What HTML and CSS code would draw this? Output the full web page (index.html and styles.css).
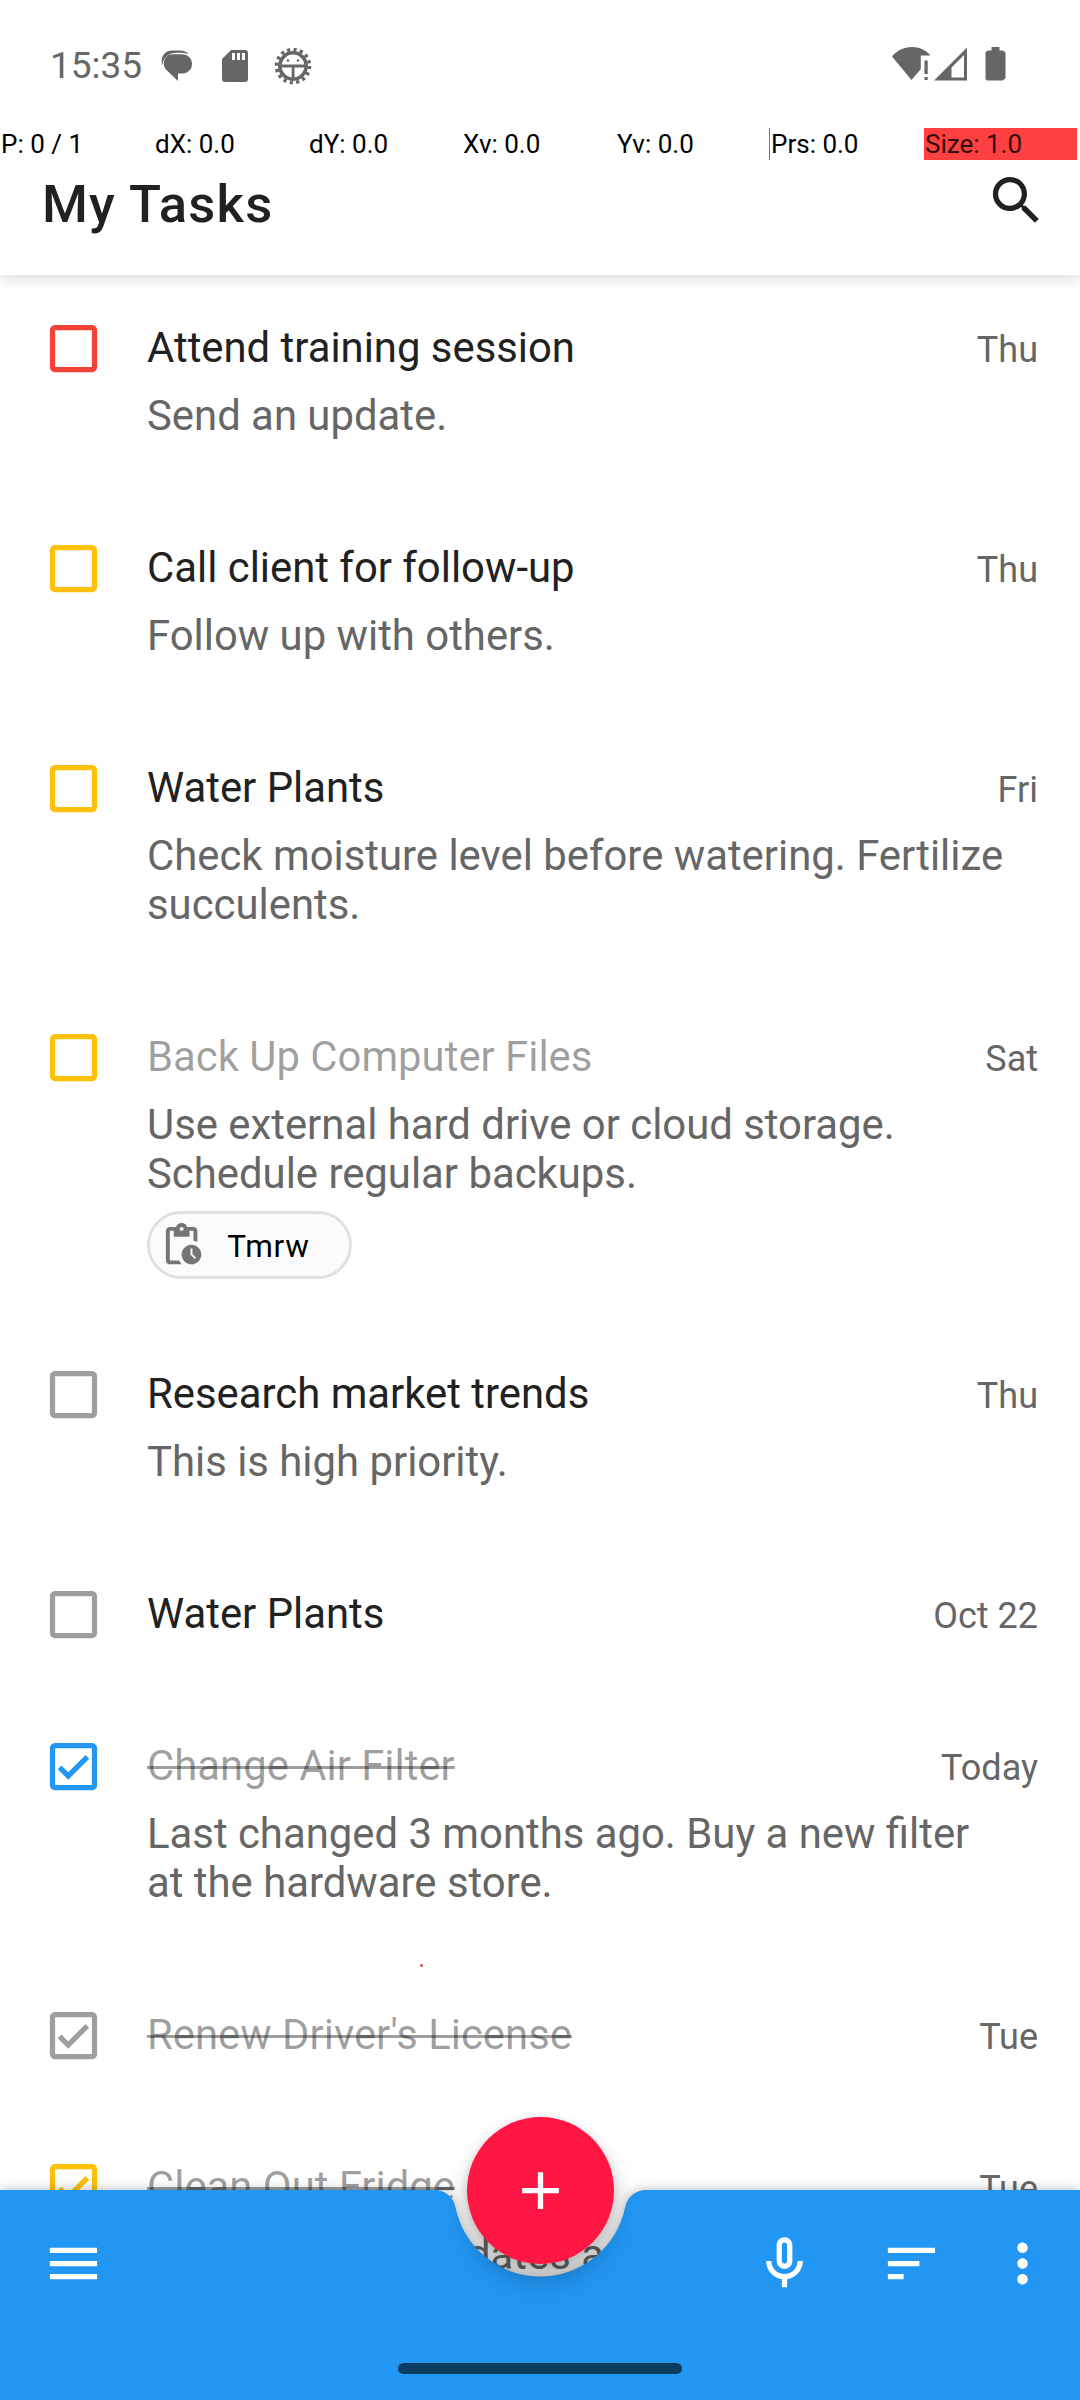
FILE: index.html
```html
<!DOCTYPE html>
<html lang="en">
<head>
<meta charset="utf-8">
<title>My Tasks</title>
<link rel="stylesheet" href="styles.css">
</head>
<body>
<svg class="defs" width="0" height="0" aria-hidden="true">
  <symbol id="box" viewBox="0 0 24 24"><path d="M19 3H5c-1.1 0-2 .9-2 2v14c0 1.1.9 2 2 2h14c1.1 0 2-.9 2-2V5c0-1.1-.9-2-2-2zm0 16H5V5h14v14z"/></symbol>
  <symbol id="box-checked" viewBox="0 0 24 24"><path d="M19 3H5c-1.1 0-2 .9-2 2v14c0 1.1.9 2 2 2h14c1.1 0 2-.9 2-2V5c0-1.1-.9-2-2-2zm0 16H5V5h14v14zM17.99 9l-1.41-1.42-6.59 6.59-2.58-2.57-1.42 1.41 4 3.99z"/></symbol>
</svg>
<div class="screen">
  <header class="app-header">
    <div class="status-bar">
      <span class="clock">15:35</span>
      <div class="notifications">
        <svg width="32" height="32" viewBox="0 0 32 32"><path d="M1 15C-.5 6 4 .5 11 .5h8c4 0 6.500 1.500 8.500 3.500C24 3 21 2.700 16 2.700 8 2.700 2.500 7 1.600 14z"/><path d="M12 4.300h9.500a9.600 9.600 0 0 1 0 19.200H17V31L5 19.500C1.500 16 1.500 4.300 12 4.300z"/></svg>
        <svg width="26" height="32" viewBox="0 0 26 32"><path fill-rule="evenodd" d="M9 0h14a3 3 0 0 1 3 3v26a3 3 0 0 1-3 3H3a3 3 0 0 1-3-3V9zM10 3v7h3V3zm5 0v7h3V3zm5 0v7h3V3z"/></svg>
        <svg width="38" height="38" viewBox="-19 -19 38 38"><circle r="16.500" fill="none" stroke="#666" stroke-width="3.600" stroke-dasharray="3.100 3.380"/><circle r="13.200" fill="none" stroke="#666" stroke-width="3.600"/><path d="M-13-1.500h26v3h-26zM-1.300 0h2.800v13h-2.800z"/><circle cx="-5" cy="-5.500" r="1.300"/><circle cx="5" cy="-5.500" r="1.300"/></svg>
      </div>
      <div class="system-icons">
        <svg width="39" height="34" viewBox="0 0 39 34"><path d="M0 9.500C10-3 29-3 38.500 8.500h-9.700v13.500L19.500 33zM32.500 13.500h3.200V27h-3.200zM32.500 30h3.200v3h-3.200z"/></svg>
        <svg class="signal" width="33" height="34" viewBox="0 0 33 34"><path fill-rule="evenodd" d="M0 33.500L33 .5v33zM17.500 30.500H30V8L17.500 20.500z"/></svg>
        <svg class="battery" width="21" height="34" viewBox="0 0 21 34"><path d="M6.500 0h8v3.500H18l2.500 2V31L18 33.500H2L.5 32V5.500l2-2h4z"/></svg>
      </div>
    </div>
    <div class="toolbar">
      <h1 class="title">My Tasks</h1>
      <svg class="icon search" viewBox="0 0 24 24"><path d="M15.500 14h-.79l-.28-.27C15.410 12.590 16 11.110 16 9.500 16 5.910 13.090 3 9.500 3S3 5.910 3 9.500 5.910 16 9.500 16c1.610 0 3.090-.59 4.230-1.570l.27.28v.79l5 4.990L20.490 19l-4.990-5zm-6 0C7.010 14 5 11.990 5 9.500S7.010 5 9.500 5 14 7.010 14 9.500 11.990 14 9.500 14z"/></svg>
    </div>
  </header>

  <ul class="tasks">
    <li class="task"><svg class="icon red"><use href="#box"/></svg>
      <div class="body"><div class="head"><span class="name">Attend training session</span><span class="date">Thu</span></div>
      <p class="note">Send an update.</p></div></li>
    <li class="task"><svg class="icon amber"><use href="#box"/></svg>
      <div class="body"><div class="head"><span class="name">Call client for follow-up</span><span class="date">Thu</span></div>
      <p class="note">Follow up with others.</p></div></li>
    <li class="task"><svg class="icon amber"><use href="#box"/></svg>
      <div class="body"><div class="head"><span class="name">Water Plants</span><span class="date">Fri</span></div>
      <p class="note">Check moisture level before watering. Fertilize succulents.</p></div></li>
    <li class="task"><svg class="icon amber"><use href="#box"/></svg>
      <div class="body"><div class="head"><span class="name hidden-until">Back Up Computer Files</span><span class="date">Sat</span></div>
      <p class="note">Use external hard drive or cloud storage. Schedule regular backups.</p>
      <div class="chip"><svg viewBox="0 0 24 24"><path d="M17 12c-2.760 0-5 2.240-5 5s2.240 5 5 5 5-2.240 5-5-2.240-5-5-5zm1.650 7.350L16.500 17.200V14h1v2.790l1.850 1.850-.7.710zM18 3h-3.180C14.400 1.840 13.300 1 12 1s-2.400.84-2.820 2H6c-1.100 0-2 .9-2 2v15c0 1.100.9 2 2 2h6.110c-.59-.57-1.070-1.250-1.420-2H6V5h2v3h8V5h2v5.080c.71.1 1.380.31 2 .6V5c0-1.100-.9-2-2-2zm-6 2c-.55 0-1-.45-1-1s.45-1 1-1 1 .45 1 1-.45 1-1 1z"/></svg><span class="chip-label">Tmrw</span></div></div></li>
    <li class="task"><svg class="icon gray"><use href="#box"/></svg>
      <div class="body"><div class="head"><span class="name">Research market trends</span><span class="date">Thu</span></div>
      <p class="note">This is high priority.</p></div></li>
    <li class="task"><svg class="icon gray"><use href="#box"/></svg>
      <div class="body"><div class="head"><span class="name">Water Plants</span><span class="date">Oct 22</span></div></div></li>
    <li class="task"><svg class="icon blue"><use href="#box-checked"/></svg>
      <div class="body"><div class="head"><span class="name done">Change Air Filter</span><span class="date">Today</span></div>
      <p class="note">Last changed 3 months ago. Buy a new filter at the hardware store.</p></div></li>
    <li class="task"><svg class="icon gray"><use href="#box-checked"/></svg>
      <div class="body"><div class="head"><span class="name done">Renew Driver's License</span><span class="date">Tue</span></div></div></li>
    <li class="task"><svg class="icon amber"><use href="#box-checked"/></svg>
      <div class="body"><div class="head"><span class="name done">Clean Out Fridge</span><span class="date">Tue</span></div>
      <p class="note">Check expiration dates and</p></div></li>
  </ul>

  <div class="pointer-strip">
    <span>P: 0 / 1</span><span>dX: 0.0</span><span>dY: 0.0</span><span>Xv: 0.0</span><span>Yv: 0.0</span><span class="pressure">Prs: 0.0</span><span class="size">Size: 1.0</span>
  </div>
  <i class="touch-dot"></i>

  <footer class="bottom-bar">
    <svg class="bar-shape" width="1080" height="210" viewBox="0 0 1080 210"><path d="M0 0H434.800A21 21 0 0 1 455.400 16.900A86.600 86.600 0 0 0 625.200 16.900A21 21 0 0 1 645.800 0H1080V210H0z"/></svg>
    <button class="fab" aria-label="Add task"><svg class="icon" viewBox="0 0 24 24"><path d="M19 13h-6v6h-2v-6H5v-2h6V5h2v6h6v2z"/></svg></button>
    <nav class="actions">
      <svg class="icon menu" viewBox="0 0 24 24"><path d="M3 18h18v-2H3v2zm0-5h18v-2H3v2zm0-7v2h18V6H3z"/></svg>
      <svg class="icon" viewBox="0 0 24 24"><path d="M12 14c1.660 0 3-1.340 3-3V5c0-1.660-1.340-3-3-3S9 3.340 9 5v6c0 1.660 1.340 3 3 3zm-1-9c0-.55.45-1 1-1s1 .45 1 1v6c0 .55-.45 1-1 1s-1-.45-1-1V5zm6 6c0 2.760-2.240 5-5 5s-5-2.240-5-5H5c0 3.530 2.610 6.430 6 6.920V21h2v-3.080c3.390-.49 6-3.390 6-6.920h-2z"/></svg>
      <svg class="icon sort" viewBox="0 0 24 24"><path d="M3 18h6v-2H3v2zM3 6v2h18V6H3zm0 7h12v-2H3v2z"/></svg>
      <svg class="icon more" viewBox="0 0 24 24"><path d="M12 8c1.100 0 2-.9 2-2s-.9-2-2-2-2 .9-2 2 .9 2 2 2zm0 2c-1.100 0-2 .9-2 2s.9 2 2 2 2-.9 2-2-.9-2-2-2zm0 6c-1.100 0-2 .9-2 2s.9 2 2 2 2-.9 2-2-.9-2-2-2z"/></svg>
    </nav>
    <div class="home-handle"></div>
  </footer>
</div>
</body>
</html>
```
FILE: styles.css
```css
* { box-sizing: border-box; }
body { margin: 0; font-family: Roboto, sans-serif; color: #212121; background: #fff; }
svg { display: block; flex: none; }
.defs { position: absolute; }
.screen { position: relative; width: 1080px; height: 2400px; overflow: hidden; }
.icon { width: 63px; height: 63px; fill: currentColor; }

.app-header { position: relative; height: 275px; background: #fff; box-shadow: 0 3px 14px rgba(0, 0, 0, .15); }
.status-bar { display: flex; align-items: center; height: 132px; padding: 0 74px 0 50px; fill: #666; }
.clock { font-size: 37px; line-height: 44px; color: #666; width: 111px; }
.notifications { display: flex; align-items: center; gap: 27px; margin-top: -2px; }
.notifications svg:nth-child(2) { margin-left: 2px; }
.notifications svg { margin-top: 1px; }
.notifications svg:nth-child(3) { margin-left: -1px; }
.system-icons { display: flex; align-items: center; margin-left: auto; margin-top: -5px; }
.signal { margin-left: 3px; }
.battery { margin-left: 18px; }
.toolbar { display: flex; justify-content: space-between; padding: 37px 32px 0 42px; }
.title { margin: 4px 0 0; font-size: 52.5px; line-height: 62px; font-weight: 500; letter-spacing: 1.2px; }

.tasks { list-style: none; margin: 0; padding: 48px 42px 0; }
.task { display: flex; gap: 42px; padding-bottom: 103px; }
.task > .icon { margin-top: -6px; margin-bottom: -8px; }
.body { flex: 1; }
.head { display: flex; justify-content: space-between; align-items: baseline; height: 49px; }
.name { font-size: 41.85px; line-height: 49px; }
.hidden-until, .done { color: rgba(0, 0, 0, .38); }
.done { text-decoration: line-through; text-decoration-thickness: 3px; text-decoration-skip-ink: none; }
.date { font-size: 36px; line-height: 42px; color: #666; }
.note { margin: 19px 0 0; max-width: 862px; font-size: 41.85px; line-height: 49px; color: #666; }
.red { color: #f44336; }
.amber { color: #ffc107; }
.blue { color: #2196f3; }
.gray { color: #9e9e9e; }
.chip { display: flex; align-items: center; gap: 22px; width: 205px; height: 68px; margin: 13px 0 -13px; padding-left: 8px; border: 3px solid #e0e0e0; border-radius: 34px; background: #fbfbfb; color: #000; }
.chip svg { width: 47.25px; height: 47.25px; fill: #757575; }
.chip-label { padding-top: 2px; font-size: 31.5px; letter-spacing: .8px; }

/* Pointer-location readout drawn by the system above every app */
.pointer-strip { position: absolute; top: 128px; left: 0; display: grid; grid-template-columns: repeat(7, 153px); gap: 1px; font-size: 26px; line-height: 32px; color: #000; }
.pointer-strip span { padding-left: 1px; height: 32px; white-space: nowrap; }
.pointer-strip .pressure { box-shadow: -1px 0 #c65555; }
.pointer-strip .size { background: #ff4040; color: #300c0c; }
.touch-dot { position: absolute; left: 420px; top: 1964px; width: 3px; height: 3px; background: #c01010; border: 1px solid #f08080; }

.bottom-bar { position: absolute; left: 0; bottom: 0; width: 1080px; height: 210px; color: #fff; }
.bar-shape { position: absolute; inset: 0; overflow: visible; fill: #2196f3; filter: drop-shadow(0 0 6px rgba(0, 0, 0, .28)); }
.fab { position: absolute; left: 467px; top: -73px; width: 147px; height: 147px; padding: 0; border: 0; border-radius: 50%; background: #ff1744; color: #fff; display: grid; place-items: center; box-shadow: 0 16px 26px rgba(0, 0, 0, .24), 0 2px 8px rgba(0, 0, 0, .12); }
.actions { position: relative; display: flex; align-items: center; padding: 41px 26px 0 42px; }
.menu { margin-right: auto; }
.sort { margin-left: 64px; }
.more { margin-left: 48px; margin-top: 1px; }
.home-handle { position: relative; width: 284px; height: 11px; margin: 68px auto 0; border-radius: 6px; background: #0d3c61; }
```
